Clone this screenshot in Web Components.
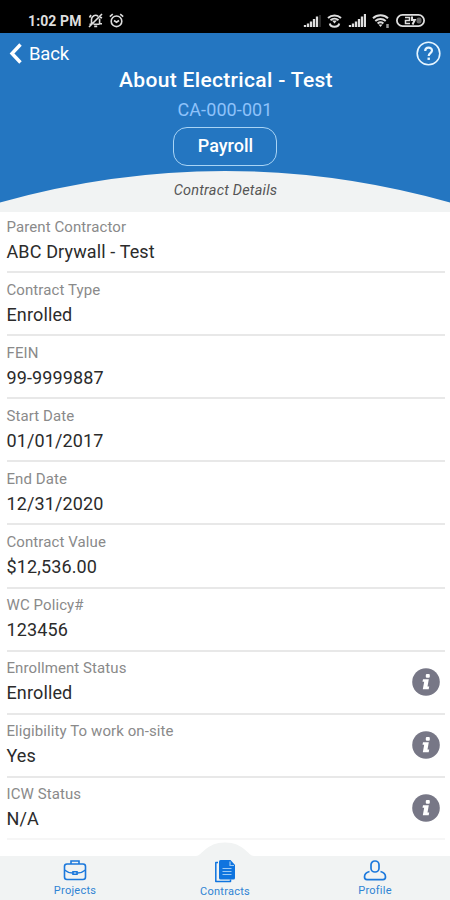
<!DOCTYPE html>
<html lang="en">
<head>
<meta charset="UTF-8">
<meta name="viewport" content="width=device-width, initial-scale=1.0">
<title>Contract Details</title>
<style>
  body {
    margin: 0;
    background: #fff;
    font-family: Roboto, "Liberation Sans", sans-serif;
  }
</style>
</head>
<body>
<contract-app></contract-app>

<script>
// Small helper: attach an open shadow root with the given markup
const mount = (el, html) => {
  el.attachShadow({ mode: 'open' }).innerHTML = html;
};

// Custom Element: phone status bar
class StatusBar extends HTMLElement {
  connectedCallback() {
    mount(this, `
      <style>
        :host {
          display: flex;
          justify-content: space-between;
          align-items: center;
          box-sizing: border-box;
          height: 33px;
          padding: 8px 25px 0 28px;
          background: #000;
          color: #dedede;
        }
        .left, .right { display: flex; align-items: center; }
        .left { gap: 6px; }
        .right { gap: 6px; }
        .time { font-size: 14px; font-weight: 700; line-height: 16px; letter-spacing: 0.1px; }
        svg { display: block; fill: none; stroke: currentColor; }
      </style>
      <div class="left">
        <span class="time">1:02 PM</span>
        <svg width="15" height="15" viewBox="0 0 15 15" stroke-width="1.6">
          <path d="M3.5 10.5V6.3a4 4 0 0 1 6.6-3M11.6 5.5v5.3H14M5.5 11.2h6M1.5 11.2h2M1 14L14 1M6.2 13.4h3"/>
          <path d="M3 2L1.5 4.5M12 4l2 1"/>
        </svg>
        <svg width="15" height="15" viewBox="0 0 15 15" stroke-width="1.6">
          <circle cx="7.5" cy="8.3" r="5.3"/>
          <path d="M5 7.5l2.5 1.7L10 7.5M.8 3.6L3.8 1.2M14.2 3.6l-3-2.4"/>
        </svg>
      </div>
      <div class="right">
        <svg width="18" height="13" viewBox="0 0 18 13" stroke-width="2.3">
          <path d="M2 13v-2M5 13V9.5M8 13V7.5M11 13V5M14 13V2.5"/>
          <path d="M17 13V1" stroke="#555" stroke-width="1"/>
        </svg>
        <svg width="15" height="14" viewBox="0 0 15 14" stroke-width="2">
          <path d="M1 4a9.5 9.5 0 0 1 13 0M3.5 6.2a6 6 0 0 1 8 0M2.8 9.5c.6 4.3 8.8 4.3 9.4 0"/>
          <path d="M5 6.5h5L7.5 9.6z" fill="currentColor" stroke="none"/>
        </svg>
        <svg width="18" height="13" viewBox="0 0 18 13" stroke-width="2.3">
          <path d="M2 13v-2M5 13V9.5M8 13V7.5M11 13V5M14 13V2.5M17 13V0"/>
        </svg>
        <svg width="18" height="14" viewBox="0 0 18 14" stroke-width="2">
          <path d="M1 4.3a11 11 0 0 1 15 0M3.3 7a8 8 0 0 1 10.4 0M5.6 9.4a4.5 4.5 0 0 1 5.8 0"/>
          <path d="M6.5 10.5h4l-2 2.5z" fill="currentColor" stroke="none"/>
          <path d="M15.5 10v4" stroke="#999" stroke-width="2.5"/>
        </svg>
        <svg width="29" height="13" viewBox="0 0 29 13">
          <rect x=".9" y=".9" width="27.2" height="11.2" rx="5.6" stroke-width="1.8"/>
          <path d="M9 3.5h4.5v3H9.5v3H14" stroke-width="1.5"/>
          <path d="M16 2.5v3.5h2.8l-2.3 4.5" stroke-width="2"/>
          <rect x="20.5" y="3.4" width="5" height="6.2" rx="2" fill="#666" stroke="none"/>
        </svg>
      </div>
    `);
  }
}
customElements.define('status-bar', StatusBar);

// Custom Element: blue header with the curved bottom edge
class ContractHeader extends HTMLElement {
  connectedCallback() {
    mount(this, `
      <style>
        :host {
          display: grid;
          height: 179px;
          background: #f1f3f3;
          color: #fff;
        }
        .curve, .content { grid-area: 1 / 1; }
        .curve { display: block; }
        .content { display: flex; flex-direction: column; align-items: center; z-index: 1; }
        .nav {
          display: flex;
          justify-content: space-between;
          align-items: center;
          align-self: stretch;
          height: 40px;
          padding: 0 9px;
        }
        .back { display: flex; align-items: center; gap: 7px; font-size: 18.5px; line-height: 24px; letter-spacing: -0.2px; }
        .back span { padding-top: 1px; }
        .back svg, .help { display: block; }
        .title { font-size: 21px; font-weight: 500; line-height: 26px; margin-top: -6px; padding-left: 2px; letter-spacing: 0.33px; }
        .code { font-size: 18px; line-height: 22px; margin-top: 6px; color: #8fc2fa; letter-spacing: 0.1px; }
        .button {
          box-sizing: border-box;
          width: 104px;
          height: 39px;
          margin-top: 6px;
          border: 1px solid #a9d4f5;
          border-radius: 14px;
          background: none;
          color: inherit;
          font: 500 18px/35px Roboto, "Liberation Sans", sans-serif;
          padding: 0 0 2px 1px;
        }
        .section { margin-top: 16px; padding-left: 1px; font-size: 14.5px; line-height: 18px; font-style: italic; color: #555; letter-spacing: 0.2px; }
      </style>
      <svg class="curve" width="450" height="179" viewBox="0 0 450 179">
        <path d="M0 0H450V169.5Q338 138 225 138T0 169.5Z" fill="#2476c1"/>
      </svg>
      <div class="content">
        <div class="nav">
          <div class="back">
            <svg width="13" height="21" viewBox="0 0 13 21" fill="none" stroke="#fff" stroke-width="3.4">
              <path d="M11.5 1.5L3 10.5l8.5 9"/>
            </svg>
            <span>Back</span>
          </div>
          <svg class="help" width="25" height="25" viewBox="0 0 25 25" fill="none" stroke="#e8f6ff">
            <circle cx="12.5" cy="12.5" r="11.3" stroke-width="1.6"/>
            <path d="M9.2 10c0-4.5 6.8-4.4 6.8-.4 0 2.6-3.3 2.6-3.3 5.4" stroke-width="2.2"/>
            <path d="M12.7 16.6v2.3" stroke-width="2.4"/>
          </svg>
        </div>
        <div class="title"><slot name="title"></slot></div>
        <div class="code"><slot name="code"></slot></div>
        <button class="button">Payroll</button>
        <div class="section"><slot name="section"></slot></div>
      </div>
    `);
  }
}
customElements.define('contract-header', ContractHeader);

// Custom Element: label/value row, "info" adds the round info icon
class DetailRow extends HTMLElement {
  connectedCallback() {
    const info = this.hasAttribute('info') ? `
      <svg width="28" height="28" viewBox="0 0 28 28">
        <circle cx="14" cy="14" r="13.8" fill="#777786"/>
        <rect x="13.8" y="6" width="4" height="3.8" rx="1" fill="#fff"/>
        <path d="M11 11.2h5.8l-1.3 7.3h1.7l-.5 2.8h-5.900l1.400-7.500h-1.700z" fill="#fff"/>
      </svg>` : '';
    mount(this, `
      <style>
        :host {
          display: flex;
          justify-content: space-between;
          align-items: center;
          box-sizing: border-box;
          height: 63.1px;
          margin: 0 5px 0 7px;
          padding-right: 5px;
          border-bottom: 2px solid #e8e8e8;
        }
        :host(:last-of-type) { height: 62px; border-bottom-color: #f6f6f6; }
        .label { font-size: 15px; line-height: 20px; color: #8a8a8a; letter-spacing: 0.09px; }
        .value { font-size: 18px; line-height: 24px; color: #2b2b2b; letter-spacing: 0.13px; margin-top: 3px; }
        .text { padding-bottom: 1px; margin-left: -0.5px; }
        svg { display: block; }
      </style>
      <div class="text">
        <div class="label">${this.getAttribute('label')}</div>
        <div class="value"><slot></slot></div>
      </div>
      ${info}
    `);
  }
}
customElements.define('detail-row', DetailRow);

// Custom Element: one tab of the bottom bar
class TabItem extends HTMLElement {
  connectedCallback() {
    mount(this, `
      <style>
        :host {
          display: flex;
          flex: 1;
          flex-direction: column;
          align-items: center;
          color: #2f83d3;
          font-size: 11px;
          line-height: 14px;
          letter-spacing: 0.25px;
        }
        ::slotted(svg) { display: block; }
        .label { margin-top: 2px; }
      </style>
      <slot></slot>
      <span class="label">${this.getAttribute('label')}</span>
    `);
  }
}
customElements.define('tab-item', TabItem);

// Custom Element: bottom bar with the raised middle
class TabBar extends HTMLElement {
  connectedCallback() {
    mount(this, `
      <style>
        :host { display: grid; height: 60px; }
        .shape, .tabs { grid-area: 1 / 1; }
        .shape { display: block; }
        .tabs { display: flex; padding-top: 20px; }
      </style>
      <svg class="shape" width="450" height="60" viewBox="0 0 450 60">
        <path d="M0 16H196C202 16 206 2.5 225 2.5S248 16 254 16H450V60H0Z" fill="#f1f3f3"/>
      </svg>
      <div class="tabs"><slot></slot></div>
    `);
  }
}
customElements.define('tab-bar', TabBar);

// Custom Element: the whole screen
class ContractApp extends HTMLElement {
  connectedCallback() {
    mount(this, `
      <style>
        :host {
          display: flex;
          flex-direction: column;
          width: 450px;
          height: 900px;
          overflow: hidden;
          background: #fff;
        }
        .rows { flex: 1; min-height: 0; margin-top: -2px; }
      </style>
      <status-bar></status-bar>
      <contract-header>
        <span slot="title">About Electrical - Test</span>
        <span slot="code">CA-000-001</span>
        <span slot="section">Contract Details</span>
      </contract-header>
      <div class="rows">
        <detail-row label="Parent Contractor">ABC Drywall - Test</detail-row>
        <detail-row label="Contract Type">Enrolled</detail-row>
        <detail-row label="FEIN">99-9999887</detail-row>
        <detail-row label="Start Date">01/01/2017</detail-row>
        <detail-row label="End Date">12/31/2020</detail-row>
        <detail-row label="Contract Value">$12,536.00</detail-row>
        <detail-row label="WC Policy#">123456</detail-row>
        <detail-row label="Enrollment Status" info>Enrolled</detail-row>
        <detail-row label="Eligibility To work on-site" info>Yes</detail-row>
        <detail-row label="ICW Status" info>N/A</detail-row>
      </div>
      <tab-bar>
        <tab-item label="Projects">
          <svg width="24" height="22" viewBox="0 0 24 22" fill="none" stroke="#1b78dc" stroke-width="1.6">
            <rect x="1.5" y="4" width="21" height="15.5" rx="2.5"/>
            <path d="M8 4V1h8v3M1.5 10c3 2.5 6 3 8 3M22.5 10c-3 2.5-6 3-8 3M10 11.8h4v2.4h-4z"/>
          </svg>
        </tab-item>
        <tab-item label="Contracts">
          <svg width="22" height="23" viewBox="0 0 22 23">
            <path d="M6.500 0h10l4.500 5v13a1.500 1.500 0 0 1-1.500 1.500h-13A1.500 1.500 0 0 1 5 18V1.500A1.500 1.500 0 0 1 6.500 0z" fill="#0f74df"/>
            <path d="M4 2.5H1.8V21.5H16.5V19.5" fill="none" stroke="#0f74df" stroke-width="1.5" stroke-linejoin="round"/>
            <path d="M16 1.5v4h4M8.5 8.5h9M8.5 11.5h9M8.5 14.5h9" fill="none" stroke="#9cc9f4" stroke-width="1.2"/>
          </svg>
        </tab-item>
        <tab-item label="Profile">
          <svg width="24" height="22" viewBox="0 0 24 22" fill="none" stroke="#1b78dc" stroke-width="1.7">
            <rect x="8" y="1" width="8" height="11" rx="3.8"/>
            <path d="M6.5 11.5C3 12.3 1.500 14 1.500 17c0 1.600 1 2.600 2.500 2.600h16c1.500 0 2.500-1 2.500-2.600 0-3-1.500-4.700-5-5.500"/>
          </svg>
        </tab-item>
      </tab-bar>
    `);
  }
}
customElements.define('contract-app', ContractApp);
</script>
</body>
</html>
